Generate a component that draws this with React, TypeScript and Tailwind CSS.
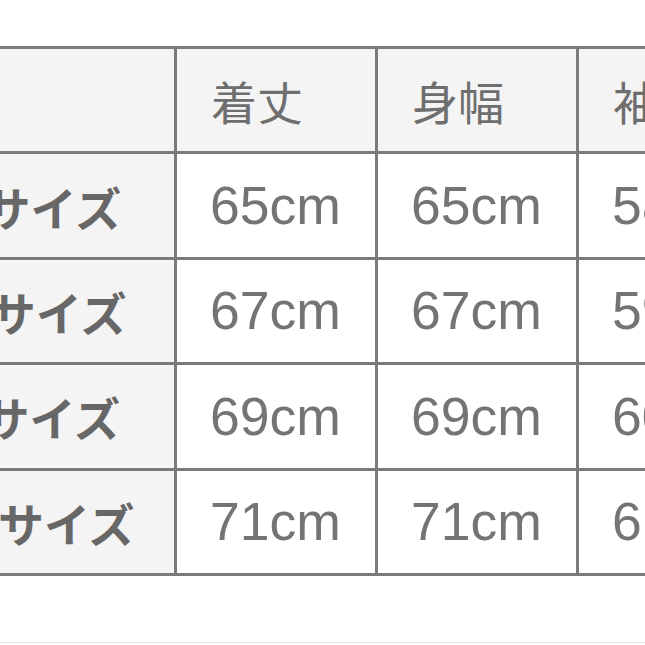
import React from "react";

const cjk = { fontFamily: '"Noto Sans CJK JP", "Noto Sans", sans-serif' };
const num = { fontFamily: '"Liberation Sans", Arial, sans-serif' };

const headers = ["着丈", "身幅", "袖丈"];
const rows = [
  { label: "Sサイズ", vals: ["65cm", "65cm", "58cm"] },
  { label: "Mサイズ", vals: ["67cm", "67cm", "59cm"] },
  { label: "Lサイズ", vals: ["69cm", "69cm", "60cm"] },
  { label: "XLサイズ", vals: ["71cm", "71cm", "61cm"] },
];

export default function App() {
  return (
    <div className="w-[645px] h-[645px] overflow-hidden bg-white">
      <div className="mt-[46px] ml-[-97px] w-[877px] flex flex-col border-t-[3px] border-[#7a7a7a]">
        <div className="flex h-[105.4px] border-b-[3px] border-[#7a7a7a] bg-[#f4f4f4]">
          <div className="w-[274px] shrink-0 border-r-[3px] border-[#7a7a7a]" />
          {headers.map((h) => (
            <div
              key={h}
              className="w-[201px] shrink-0 border-r-[3px] border-[#7a7a7a] flex items-center pl-[34px] text-[46px] text-[#6e6e6e] leading-none"
              style={cjk}
            >
              {h}
            </div>
          ))}
        </div>
        {rows.map((r) => (
          <div key={r.label} className="flex h-[105.4px] border-b-[3px] border-[#7a7a7a]">
            <div
              className="w-[274px] shrink-0 border-r-[3px] border-[#7a7a7a] bg-[#f4f4f4] flex items-center justify-center text-[46px] font-bold text-[#676767] leading-none"
              style={cjk}
            >
              {r.label}
            </div>
            {r.vals.map((v, i) => (
              <div
                key={i}
                className="w-[201px] shrink-0 border-r-[3px] border-[#7a7a7a] bg-white flex items-center pl-[33px] text-[53.5px] text-[#747474] leading-none"
                style={num}
              >
                {v}
              </div>
            ))}
          </div>
        ))}
      </div>
      <div className="mt-[66px] h-px bg-[#e4e4e4]" />
    </div>
  );
}
